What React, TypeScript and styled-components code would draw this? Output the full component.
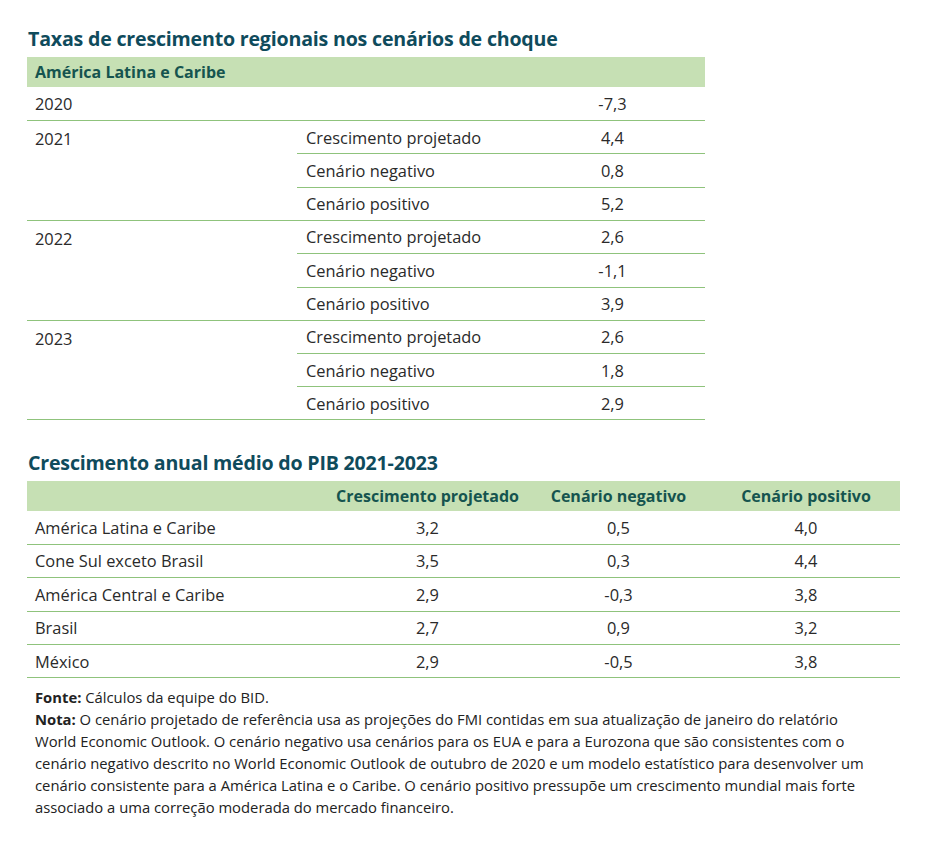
import React from "react";
import styled, { createGlobalStyle } from "styled-components";

const Global = createGlobalStyle`
  html, body { margin: 0; padding: 0; background: #ffffff; }
  body { font-family: "Open Sans", "Liberation Sans", sans-serif; color: #2a2a2a; }
`;

const Page = styled.div`
  width: 936px;
  height: 844px;
  box-sizing: border-box;
  padding: 26px 36px 0 27px;
  display: flex;
  flex-direction: column;
`;

const Title = styled.h2<{ $mt?: number }>`
  margin: ${(p) => p.$mt ?? 0}px 0 0 1px;
  font-size: 19.6px;
  line-height: 26px;
  font-weight: 700;
  color: #0f4b5c;
  letter-spacing: -0.2px;
  height: 31px;
`;

const Table1 = styled.div`
  width: 678px;
  display: flex;
  flex-direction: column;
`;

const Band = styled.div<{ $cols: string }>`
  background: #c6e0b4;
  height: 30px;
  display: grid;
  grid-template-columns: ${(p) => p.$cols};
  align-items: center;
  font-weight: 700;
  font-size: 16px;
  color: #15544f;
`;

const BandCell = styled.div<{ $center?: boolean }>`
  padding-left: ${(p) => (p.$center ? 0 : 8)}px;
  text-align: ${(p) => (p.$center ? "center" : "left")};
  white-space: nowrap;
`;

const Row = styled.div<{ $cols: string; $h?: number }>`
  display: grid;
  grid-template-columns: ${(p) => p.$cols};
  align-items: center;
  height: ${(p) => p.$h ?? 33.4}px;
  box-sizing: border-box;
  border-bottom: 1.5px solid #8fc37c;
  font-size: 16.4px;
`;

const Cell = styled.div<{ $center?: boolean; $pad?: number }>`
  padding-left: ${(p) => (p.$center ? 0 : p.$pad ?? 8)}px;
  text-align: ${(p) => (p.$center ? "center" : "left")};
  white-space: nowrap;
`;

const Group = styled.div`
  display: grid;
  grid-template-columns: 270px 1fr;
  border-bottom: 1.5px solid #8fc37c;
  font-size: 16.4px;
`;

const YearCell = styled.div`
  padding: 7px 0 0 8px;
  line-height: 21px;
`;

const SubList = styled.div`
  display: flex;
  flex-direction: column;
`;

const SubRow = styled.div<{ $last?: boolean }>`
  display: grid;
  grid-template-columns: 223px 185px;
  align-items: center;
  height: ${(p) => (p.$last ? 32 : 33.4)}px;
  box-sizing: border-box;
  border-bottom: ${(p) => (p.$last ? "none" : "1.5px solid #8fc37c")};
`;

const Table2 = styled.div`
  width: 873px;
  display: flex;
  flex-direction: column;
`;

const Notes = styled.div`
  margin-top: 8px;
  padding-left: 8px;
  font-size: 14.8px;
  line-height: 22px;
  color: #222;
  width: 880px;
`;

const NoteLine = styled.p`
  margin: 0;
  white-space: nowrap;
`;

const Label = styled.b`
  font-weight: 700;
`;

const groups = [
  { year: "2021", vals: ["4,4", "0,8", "5,2"] },
  { year: "2022", vals: ["2,6", "-1,1", "3,9"] },
  { year: "2023", vals: ["2,6", "1,8", "2,9"] },
];
const subLabels = ["Crescimento projetado", "Cenário negativo", "Cenário positivo"];

const cols2 = "303px 195px 187px 188px";
const rows2 = [
  ["América Latina e Caribe", "3,2", "0,5", "4,0"],
  ["Cone Sul exceto Brasil", "3,5", "0,3", "4,4"],
  ["América Central e Caribe", "2,9", "-0,3", "3,8"],
  ["Brasil", "2,7", "0,9", "3,2"],
  ["México", "2,9", "-0,5", "3,8"],
];

export default function App() {
  return (
    <>
      <Global />
      <Page>
        <Title>Taxas de crescimento regionais nos cenários de choque</Title>
        <Table1>
          <Band $cols="1fr">
            <BandCell>América Latina e Caribe</BandCell>
          </Band>
          <Row $cols="270px 223px 185px" $h={34}>
            <Cell>2020</Cell>
            <Cell />
            <Cell $center>-7,3</Cell>
          </Row>
          {groups.map((g) => (
            <Group key={g.year}>
              <YearCell>{g.year}</YearCell>
              <SubList>
                {g.vals.map((v, i) => (
                  <SubRow key={i} $last={i === 2}>
                    <Cell $pad={9}>{subLabels[i]}</Cell>
                    <Cell $center>{v}</Cell>
                  </SubRow>
                ))}
              </SubList>
            </Group>
          ))}
        </Table1>

        <Title $mt={30}>Crescimento anual médio do PIB 2021-2023</Title>
        <Table2>
          <Band $cols={cols2}>
            <BandCell />
            <BandCell $center>Crescimento projetado</BandCell>
            <BandCell $center>Cenário negativo</BandCell>
            <BandCell $center>Cenário positivo</BandCell>
          </Band>
          {rows2.map((r) => (
            <Row key={r[0]} $cols={cols2}>
              <Cell>{r[0]}</Cell>
              <Cell $center>{r[1]}</Cell>
              <Cell $center>{r[2]}</Cell>
              <Cell $center>{r[3]}</Cell>
            </Row>
          ))}
        </Table2>

        <Notes>
          <NoteLine>
            <Label>Fonte:</Label> Cálculos da equipe do BID.
          </NoteLine>
          <NoteLine>
            <Label>Nota:</Label> O cenário projetado de referência usa as projeções do FMI contidas em sua atualização de janeiro do relatório
            <br />
            World Economic Outlook. O cenário negativo usa cenários para os EUA e para a Eurozona que são consistentes com o
            <br />
            cenário negativo descrito no World Economic Outlook de outubro de 2020 e um modelo estatístico para desenvolver um
            <br />
            cenário consistente para a América Latina e o Caribe. O cenário positivo pressupõe um crescimento mundial mais forte
            <br />
            associado a uma correção moderada do mercado financeiro.
          </NoteLine>
        </Notes>
      </Page>
    </>
  );
}
